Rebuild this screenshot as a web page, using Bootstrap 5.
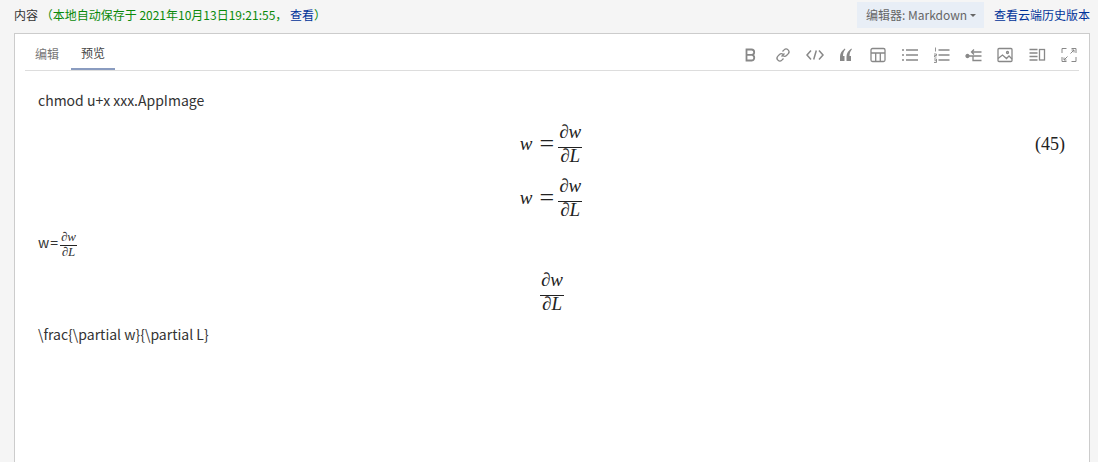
<!DOCTYPE html>
<html lang="zh">
<head>
  <meta charset="UTF-8">
  <title>内容</title>
  <link href="https://cdn.jsdelivr.net/npm/bootstrap@5.3.0/dist/css/bootstrap.min.css" rel="stylesheet">
  <style>
    html, body { height: 100%; overflow: hidden; }
    body { background: #f5f5f5; font-family: "Noto Sans CJK SC", sans-serif; font-size: 14px; color: #333; }
    a { text-decoration: none; color: #003399; }
    .top-bar { height: 33px; padding: 0 8px 3px 14px; }
    .top-title { font-size: 12px; color: #333; }
    .saved-note { color: #0a8a0a; }
    .editor-switch { height: 26px; width: 127px; padding: 0 0 0 9px; background: #e8eef6; color: #666; font-size: 12px; margin-right: 10px; }
    .editor-switch::after { content: ""; display: inline-block; margin-left: 3px; border-top: 3px solid #666; border-left: 3px solid transparent; border-right: 3px solid transparent; vertical-align: 2px; }
    .history-link { font-size: 12px; }
    .editor-box { margin-left: 14px; width: 1076px; height: 429px; background: #fff; border: 1px solid #ccc; border-bottom: 0; padding: 0 10px; }
    .tab-row { height: 37px; border-bottom: 1px solid #ddd; }
    .tab-item { width: 44px; height: 36px; display: flex; align-items: center; justify-content: center; font-size: 12px; color: #777; padding-top: 4px; }
    .tab-item.is-active { color: #444; border-bottom: 2px solid #8a9cc0; margin-left: 2px; }
    .tool-row { gap: 13.800px; padding-right: 1px; padding-top: 5px; }
    .tool-row svg { width: 18px; height: 18px; fill: none; stroke: #888; stroke-width: 1.3; display: block; }
    .preview-pane { padding: 18px 13px 0 13px; font-size: 14px; line-height: 22px; color: #333; }
    .preview-pane p { margin: 0; }
    .math-block { position: relative; display: flex; justify-content: center; align-items: center; font-family: "Liberation Serif", serif; font-size: 19px; color: #222; }
    .eq-row { padding-right: 2px; }
    .math-var { font-style: italic; margin-top: 3px; }
    .math-eq { margin: 3px 4px 0 7px; font-size: 26px; line-height: 1; }
    .math-frac { display: inline-flex; flex-direction: column; align-items: center; line-height: 1; width: 24px; }
    .math-frac .num { padding-bottom: 4px; line-height: 22px; font-style: italic; }
    .math-frac .den { border-top: 1px solid #222; line-height: 16px; font-style: italic; width: 100%; text-align: center; }
    .math-num { position: absolute; right: 1px; top: 12px; font-size: 18px; }
    .wide-text { letter-spacing: 1px; }
    .inline-frac { font-family: "Liberation Serif", serif; font-size: 13px; font-style: italic; vertical-align: middle; display: inline-flex; flex-direction: column; align-items: center; margin-left: 1px; width: 17px; }
    .inline-frac .num { line-height: 12px; padding-bottom: 2px; }
    .inline-frac .den { line-height: 12px; border-top: 1px solid #222; width: 100%; text-align: center; }
    .gap-a { margin-top: 10px; }
    .gap-b { margin-top: 11px; }
    .preview-pane .gap-c { margin-top: 13px; }
    .gap-e { margin-top: 11px; }
    .preview-pane .gap-d { margin-top: 11px; }
  </style>
</head>
<body>
  <!-- header -->
  <div class="top-bar d-flex align-items-center justify-content-between">
    <div class="top-title">内容 <span class="saved-note">（本地自动保存于 2021年10月13日19:21:55， <a href="#">查看</a>）</span></div>
    <div class="d-flex align-items-center">
      <div class="editor-switch d-flex align-items-center">编辑器: Markdown</div>
      <a class="history-link" href="#">查看云端历史版本</a>
    </div>
  </div>

  <div class="editor-box">
    <!-- tabs + toolbar -->
    <div class="tab-row d-flex justify-content-between">
      <div class="d-flex">
        <div class="tab-item">编辑</div>
        <div class="tab-item is-active">预览</div>
      </div>
      <div class="tool-row d-flex align-items-center">
        <svg viewBox="0 0 18 18"><path stroke-width="1.800" d="M4.500 3.500h5a2.600 2.600 0 0 1 0 5.400h-5zM4.500 8.900h5.600a2.900 2.900 0 0 1 0 5.600H4.500z"/></svg>
        <svg viewBox="0 0 18 18"><path d="M7.500 10.500l3-3M8.500 5.500l1.600-1.600a2.800 2.800 0 0 1 4 4L12.500 9.500a2.800 2.800 0 0 1-3.500.3M9.500 12.500l-1.600 1.600a2.800 2.800 0 0 1-4-4L5.500 8.500a2.800 2.800 0 0 1 3.500-.3"/></svg>
        <svg viewBox="0 0 18 18"><path stroke-width="1.500" d="M5 4.500L1 9l4 4.500M13 4.500L17 9l-4 4.500M10.300 4.500l-2.600 9"/></svg>
        <svg viewBox="0 0 18 18"><path fill="#888" stroke="none" d="M7.800 2.500L8.400 3.200C6.500 5.500 6.100 7.300 6 10H7.500V15H3V10.500C3 7.200 5 4.500 7.800 2.500zM14.300 2.500L14.900 3.200C13 5.500 12.600 7.300 12.500 10H14V15H9.500V10.500C9.500 7.200 11.500 4.500 14.300 2.500z"/></svg>
        <svg viewBox="0 0 18 18"><rect x="2" y="2.500" width="14" height="13" rx="1.500"/><path d="M2 7h14M6.700 7v8.500M11.300 7v8.500"/></svg>
        <svg viewBox="0 0 18 18"><path d="M5 4h12M5 9h12M5 14h12"/><path stroke-width="1.600" d="M1 4h2M1 9h2M1 14h2"/></svg>
        <svg viewBox="0 0 18 18"><path d="M5.500 4h11M5.500 9h11M5.500 14h11"/><path stroke-width=".9" d="M2.500 1.500v4M1 8h2.500v1.500H1.500V11h2M1 13h2.500v3.500H1M1.500 14.700h2"/></svg>
        <svg viewBox="0 0 18 18"><circle cx="2.500" cy="10" r="1.500" fill="#888"/><path d="M3.500 10h4.500M6.500 6h10M9 3.500L6.500 6 9 8.500M8 10h8.500M8 10v4.500h8.500"/></svg>
        <svg viewBox="0 0 18 18"><rect x="2" y="2.500" width="14" height="13" rx="1"/><path d="M2 12.500l4.500-3.500 4 3.500 2.500-2.500 3 3"/><circle cx="11.500" cy="6.500" r="1"/></svg>
        <svg viewBox="0 0 18 18"><path d="M1.500 3.500h8M1.500 7h8M1.500 10.500h8M1.500 14h8"/><rect x="11.500" y="3.500" width="5" height="10.500"/></svg>
        <svg viewBox="0 0 18 18"><g stroke-width="1"><path d="M2 7V2.500h4.500M11.500 2.500H16V7M16 11v4.500h-4.500M6.500 15.500H2V11M10.500 7.500l3.500-3.500M11.500 4h2.500v2.500M7.500 10.500L4 14M4 11.500V14h2.500"/></g></svg>
      </div>
    </div>

    <!-- preview -->
    <div class="preview-pane">
      <p>chmod u+x xxx.AppImage</p>
      <div class="math-block eq-row gap-a">
        <span class="math-var">w</span><span class="math-eq">=</span>
        <span class="math-frac"><span class="num">∂w</span><span class="den">∂L</span></span>
        <span class="math-num">(45)</span>
      </div>
      <div class="math-block eq-row gap-b">
        <span class="math-var">w</span><span class="math-eq">=</span>
        <span class="math-frac"><span class="num">∂w</span><span class="den">∂L</span></span>
      </div>
      <p class="gap-c"><span class="wide-text">w=</span><span class="inline-frac"><span class="num">∂w</span><span class="den">∂L</span></span></p>
      <div class="math-block gap-e">
        <span class="math-frac"><span class="num">∂w</span><span class="den">∂L</span></span>
      </div>
      <p class="gap-d">\frac{\partial w}{\partial L}</p>
    </div>
  </div>

  <script src="https://cdn.jsdelivr.net/npm/bootstrap@5.3.0/dist/js/bootstrap.bundle.min.js"></script>
</body>
</html>
